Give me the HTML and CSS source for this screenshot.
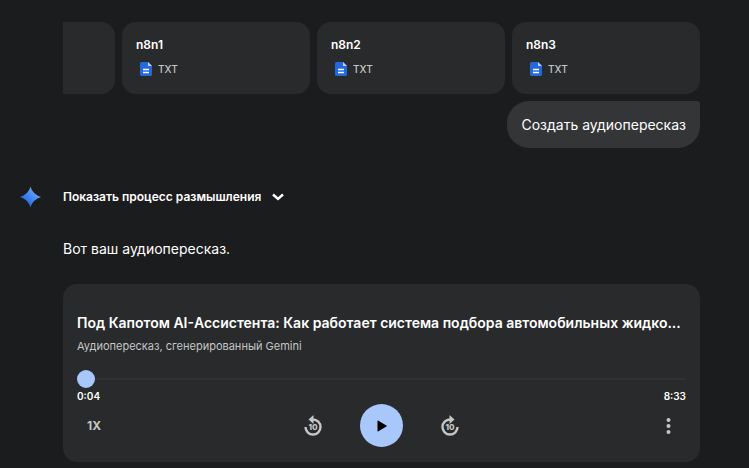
FILE: index.html
```html
<!DOCTYPE html>
<html lang="ru">
  <head>
    <meta charset="UTF-8" />
    <meta name="viewport" content="width=device-width, initial-scale=1.0" />
    <title>Аудиопересказ</title>
    <link rel="stylesheet" href="styles.css">
  </head>
  <body>
    <svg class="defs" width="0" height="0">
      <symbol id="doc" viewBox="0 0 12 14">
        <path d="M1.5 0H8l4 4v8.5a1.5 1.5 0 0 1-1.5 1.5h-9A1.5 1.5 0 0 1 0 12.5v-11A1.5 1.5 0 0 1 1.5 0z" fill="#2368dc" />
        <path d="M8 0l4 4H8z" fill="#b9d3ff" />
        <path d="M3 7.500h6M3 10.500h6" stroke="#fff" stroke-width="1.300" />
      </symbol>
    </svg>
    <main class="chat">
      <div class="files">
        <div class="file"></div>
        <div class="file">
          <div class="file-name">n8n1</div>
          <div class="file-type"><svg class="doc"><use href="#doc" /></svg>TXT</div>
        </div>
        <div class="file">
          <div class="file-name">n8n2</div>
          <div class="file-type"><svg class="doc"><use href="#doc" /></svg>TXT</div>
        </div>
        <div class="file">
          <div class="file-name">n8n3</div>
          <div class="file-type"><svg class="doc"><use href="#doc" /></svg>TXT</div>
        </div>
      </div>
      <div class="bubble">Создать аудиопересказ</div>

      <div class="thoughts">
        <svg class="spark" viewBox="0 0 20 20">
          <defs>
            <linearGradient id="sparkFill" x1="0" y1="1" x2="1" y2="0">
              <stop offset="0.2" stop-color="#2563eb" />
              <stop offset="0.5" stop-color="#4285f4" />
              <stop offset="0.8" stop-color="#6fa8f5" />
            </linearGradient>
          </defs>
          <path d="M10 0C11.500 5 15 8.500 20 10C15 11.500 11.500 15 10 20C8.500 15 5 11.500 0 10C5 8.500 8.500 5 10 0z" fill="url(#sparkFill)" />
        </svg>
        <button class="thoughts-toggle">
          Показать процесс размышления
          <svg class="chevron" viewBox="0 0 12 8"><path d="M1 1.500L6 6l5-4.500" /></svg>
        </button>
      </div>
      <p class="answer">Вот ваш аудиопересказ.</p>

      <section class="player">
        <h2 class="title">Под Капотом AI-Ассистента: Как работает система подбора автомобильных жидко...</h2>
        <div class="subtitle">Аудиопересказ, сгенерированный Gemini</div>
        <input class="seek" type="range" min="0" max="513" value="0" aria-label="Позиция" />
        <div class="times"><span>0:04</span><span>8:33</span></div>
        <div class="controls">
          <button class="speed">1X</button>
          <div class="transport">
            <button class="icon-btn" aria-label="Назад на 10 секунд">
              <svg class="skip" viewBox="0 0 20 22">
                <path class="ring" d="M10 4.500a7.500 7.500 0 1 1-7.500 7.500" />
                <path class="head" d="M10.500 0v9L5.500 4.500z" />
                <text x="10" y="15">10</text>
              </svg>
            </button>
            <button class="play" aria-label="Воспроизвести">
              <svg class="play-icon" viewBox="0 0 10 12"><path d="M0.500 1.200v9.600q0 1 0.900 0.500l8-4.700q0.900-0.600 0-1.200l-8-4.700q-0.900-0.500-0.900 0.500z" /></svg>
            </button>
            <button class="icon-btn" aria-label="Вперёд на 10 секунд">
              <svg class="skip" viewBox="0 0 20 22">
                <path class="ring" d="M10 4.500a7.500 7.500 0 1 0 7.500 7.500" />
                <path class="head" d="M9.500 0v9l5-4.500z" />
                <text x="10" y="15">10</text>
              </svg>
            </button>
          </div>
          <button class="more" aria-label="Ещё">
            <svg class="dots" viewBox="0 0 4 16"><circle cx="2" cy="2" r="2" /><circle cx="2" cy="8" r="2" /><circle cx="2" cy="14" r="2" /></svg>
          </button>
        </div>
      </section>
    </main>
  </body>
</html>
```
FILE: styles.css
```css
* {
  box-sizing: border-box;
}
body {
  margin: 0;
  background: #1b1c1d;
  color: #fff;
  font-family: Inter, "Open Sans", sans-serif;
}
button {
  display: flex;
  align-items: center;
  justify-content: center;
  padding: 0;
  border: 0;
  background: none;
  color: inherit;
  font-family: inherit;
  cursor: pointer;
}
.defs {
  position: absolute;
}
.chat {
  display: flex;
  flex-direction: column;
  padding: 22px 49px 6px 63px;
}
.files {
  display: flex;
  justify-content: flex-end;
  gap: 7px;
  overflow: hidden;
}
.file {
  flex: 0 0 188px;
  height: 72px;
  padding: 14px;
  border-radius: 14px;
  background: #282a2c;
}
.file-name {
  font-size: 12px;
  font-weight: 600;
  line-height: 18px;
}
.file-type {
  display: flex;
  align-items: center;
  gap: 6px;
  margin-top: 6px;
  padding-left: 4px;
  color: #c4c7c5;
  font-size: 10px;
  font-weight: 500;
  line-height: 18px;
}
.doc {
  width: 12px;
  height: 14px;
}
.bubble {
  align-self: flex-end;
  margin-top: 7px;
  padding: 12px 14px;
  border-radius: 22px 4px 22px 22px;
  background: #333537;
  font-size: 14px;
  line-height: 23px;
}
.thoughts {
  display: flex;
  align-items: center;
  gap: 22px;
  margin: 38px 0 0 -43px;
}
.spark {
  width: 21px;
  height: 22px;
}
.thoughts-toggle {
  gap: 11px;
  font-size: 12px;
  font-weight: 600;
  line-height: 22px;
}
.chevron {
  width: 12px;
  height: 8px;
  fill: none;
  stroke: #fff;
  stroke-width: 2.4;
}
.answer {
  margin: 30px 0 24px;
  font-size: 14px;
  line-height: 22px;
}
.player {
  padding: 28px 14px 15px;
  border-radius: 14px;
  background: #282a2c;
}
.title {
  margin: 0;
  overflow: hidden;
  font-size: 14px;
  font-weight: 600;
  line-height: 22px;
  text-overflow: ellipsis;
  white-space: nowrap;
}
.subtitle {
  margin-top: 3px;
  color: #c4c7c5;
  font-size: 11px;
  line-height: 18px;
}
.seek {
  display: block;
  width: 100%;
  height: 18px;
  margin: 15px 0 0;
  appearance: none;
  background: none;
}
.seek::-webkit-slider-runnable-track {
  height: 2px;
  border-radius: 2px;
  background: #303234;
}
.seek::-webkit-slider-thumb {
  width: 18px;
  height: 18px;
  margin-top: -8px;
  appearance: none;
  border-radius: 50%;
  background: #a8c7fa;
}
.times {
  display: flex;
  justify-content: space-between;
  font-size: 10px;
  font-weight: 600;
  line-height: 16px;
}
.controls {
  display: grid;
  grid-template-columns: 1fr auto 1fr;
  align-items: center;
}
.speed {
  width: 34px;
  height: 34px;
  color: #c4c7c5;
  font-size: 12px;
  font-weight: 700;
}
.transport {
  display: flex;
  align-items: center;
  gap: 30px;
}
.icon-btn {
  width: 34px;
  height: 34px;
}
.skip {
  width: 20px;
  height: 22px;
  fill: #c4c7c5;
}
.skip .ring {
  fill: none;
  stroke: #c4c7c5;
  stroke-width: 2.4;
}
.skip text {
  font-size: 8px;
  font-weight: 800;
  text-anchor: middle;
}
.play {
  width: 43px;
  height: 43px;
  border-radius: 50%;
  background: #a8c7fa;
}
.play-icon {
  width: 10px;
  height: 12px;
  fill: #000;
}
.more {
  justify-self: end;
  width: 36px;
  height: 34px;
}
.dots {
  width: 5px;
  height: 16px;
  fill: #c4c7c5;
}
```
